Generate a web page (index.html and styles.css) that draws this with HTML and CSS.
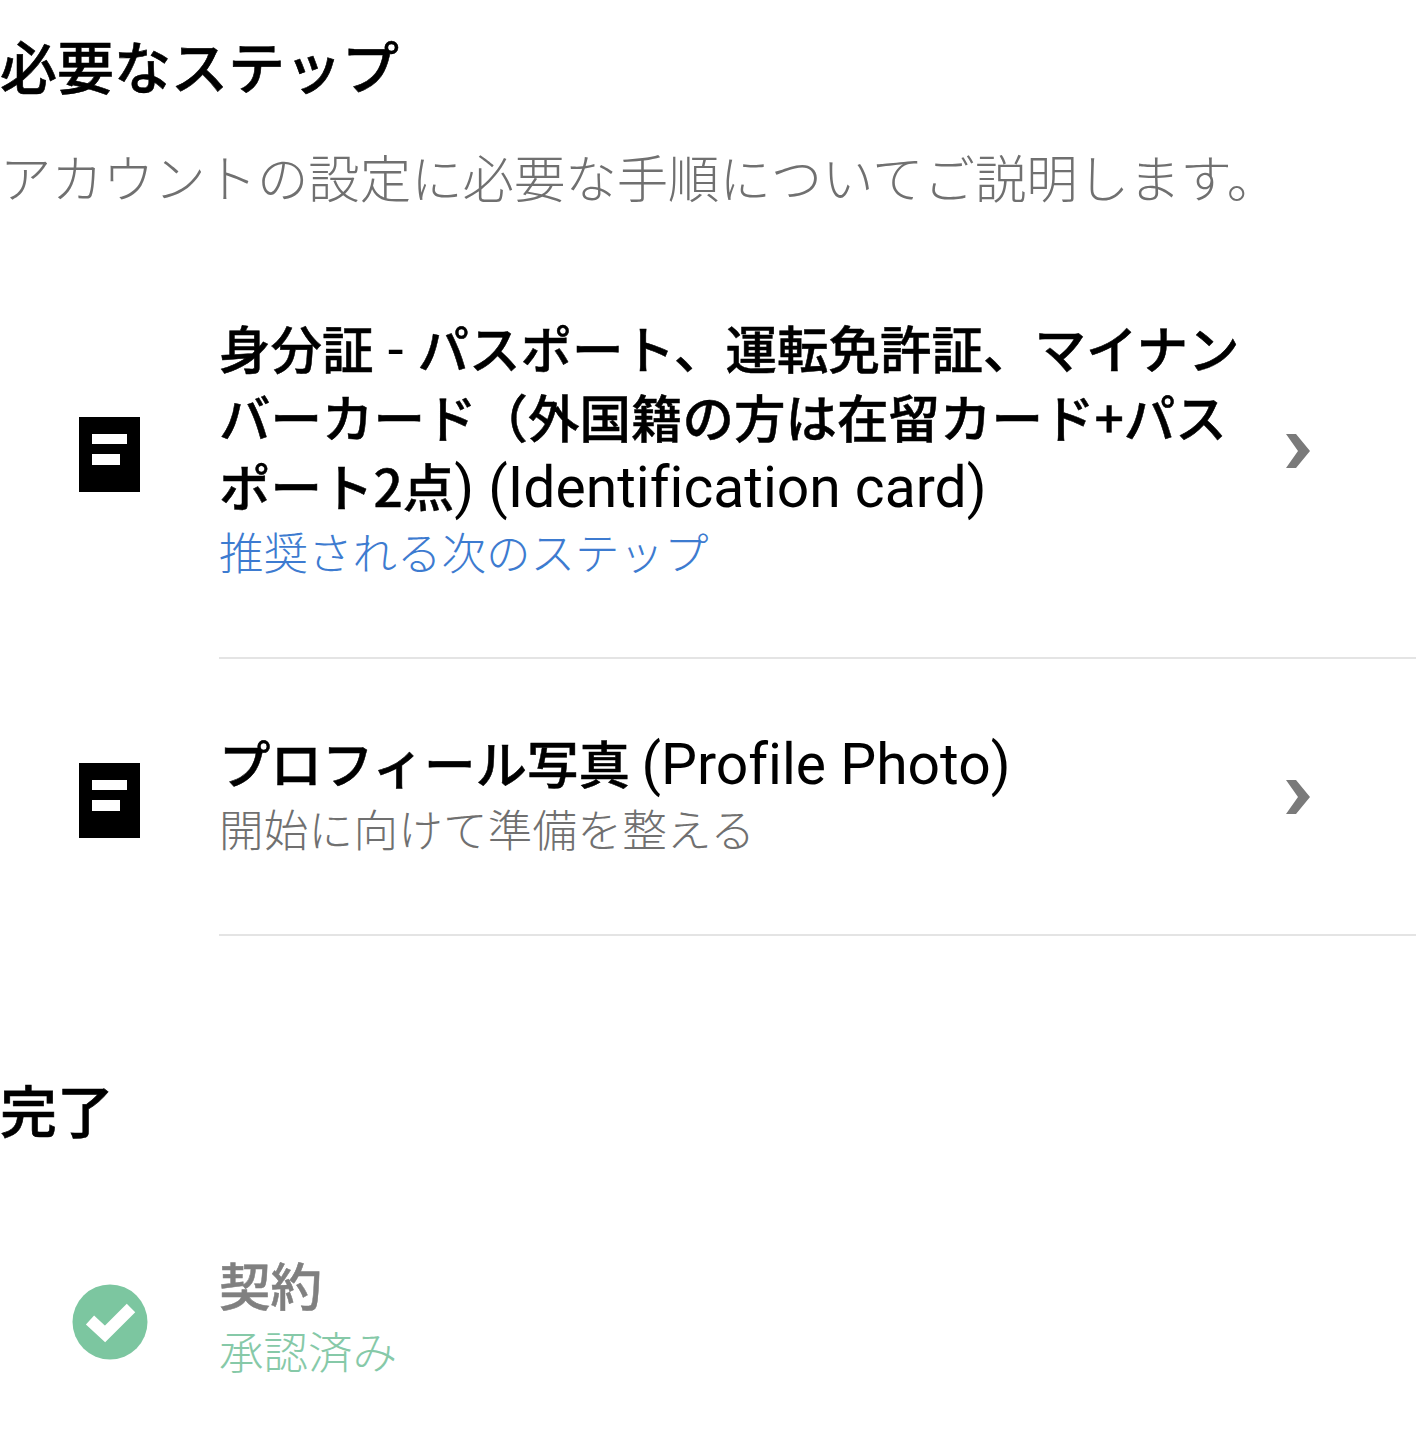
FILE: index.html
```html
<!DOCTYPE html>
<html lang="ja">
  <head>
    <title>必要なステップ</title>
    <link rel="stylesheet" href="styles.css">
  </head>
  <body>
    <h2 class="heading">必要なステップ</h2>
    <p class="intro">アカウントの設定に必要な手順についてご説明します。</p>

    <div class="step step-first">
      <div class="step-icon">
        <svg width="61" height="75" viewBox="0 0 61 75"><path fill="#000" fill-rule="evenodd" d="M0 0H61V75H0ZM13 17V27H48V17ZM13 37V48H41V37Z"/></svg>
      </div>
      <div class="step-main">
        <div class="step-body">
          <div class="step-title">身分証<span class="latin"> - </span>パスポート、運転免許証、マイナンバーカード（外国籍の方は在留カード+パスポート2点<span class="latin">) (Identification card)</span></div>
          <div class="step-note note-blue">推奨される次のステップ</div>
        </div>
        <div class="step-arrow">
          <svg width="24" height="34" viewBox="0 0 24 34"><path fill="#7a7a7a" d="M0 0H10L24 17L10 34H0L12 17Z"/></svg>
        </div>
      </div>
    </div>

    <div class="step">
      <div class="step-icon">
        <svg width="61" height="75" viewBox="0 0 61 75"><path fill="#000" fill-rule="evenodd" d="M0 0H61V75H0ZM13 17V27H48V17ZM13 37V48H41V37Z"/></svg>
      </div>
      <div class="step-main">
        <div class="step-body">
          <div class="step-title">プロフィール写真 <span class="latin">(Profile Photo)</span></div>
          <div class="step-note note-gray">開始に向けて準備を整える</div>
        </div>
        <div class="step-arrow">
          <svg width="24" height="34" viewBox="0 0 24 34"><path fill="#7a7a7a" d="M0 0H10L24 17L10 34H0L12 17Z"/></svg>
        </div>
      </div>
    </div>

    <h2 class="heading heading-done">完了</h2>

    <div class="step step-done">
      <div class="step-icon icon-done">
        <svg width="76" height="76" viewBox="0 0 76 76"><circle cx="38" cy="38" r="37.5" fill="#7cc6a0"/><path fill="none" stroke="#fff" stroke-width="12" d="M18 36L33 50L59 24"/></svg>
      </div>
      <div class="step-main main-done">
        <div class="step-body">
          <div class="step-title title-done">契約</div>
          <div class="step-note note-green">承認済み</div>
        </div>
      </div>
    </div>
  </body>
</html>
```

FILE: styles.css
```css
body {
  margin: 0;
  background: #fff;
  color: #000;
  font-family: "Noto Sans CJK JP", sans-serif;
  overflow: hidden;
}
.heading {
  margin: 0;
  padding-top: 25px;
  font-size: 57px;
  line-height: 78px;
  font-weight: 500;
  -webkit-text-stroke: 0.6px #000;
}
.heading-done {
  padding-top: 133px;
}
.intro {
  margin: 0;
  padding-top: 36px;
  font-size: 51.4px;
  line-height: 74px;
  color: #707070;
  font-weight: 300;
}
.step {
  display: flex;
}
.step-first {
  margin-top: 31px;
}
.step-done {
  margin-top: 102px;
}
.step-icon {
  width: 219px;
  flex: none;
  display: flex;
  justify-content: center;
  align-items: center;
  padding-top: 6px;
  box-sizing: border-box;
}
.icon-done {
  padding-top: 12px;
}
.step-main {
  flex: 1;
  display: flex;
  align-items: center;
  border-bottom: 2px solid #e4e4e4;
}
.main-done {
  border-bottom: 0;
}
.step-body {
  flex: none;
  width: 1040px;
  padding: 68px 0 74px;
}
.main-done .step-body {
  padding: 0;
}
.step-title {
  font-size: 51.5px;
  line-height: 69px;
  font-weight: 500;
  -webkit-text-stroke: 0.5px #000;
}
.latin {
  font-family: "Roboto", "Liberation Sans", sans-serif;
  font-size: 57px;
  line-height: 0;
  font-weight: 400;
  font-variant-ligatures: none;
  -webkit-text-stroke: 0;
}
.title-done {
  color: #808080;
  -webkit-text-stroke: 0.5px #808080;
}
.step-note {
  font-size: 44.5px;
  line-height: 64px;
  font-weight: 300;
}
.note-blue {
  color: #3d7bd0;
}
.note-gray {
  color: #707070;
  letter-spacing: 0.3px;
}
.note-green {
  color: #86c9a8;
}
.step-arrow {
  flex: none;
  display: flex;
  padding-left: 27px;
}
```
